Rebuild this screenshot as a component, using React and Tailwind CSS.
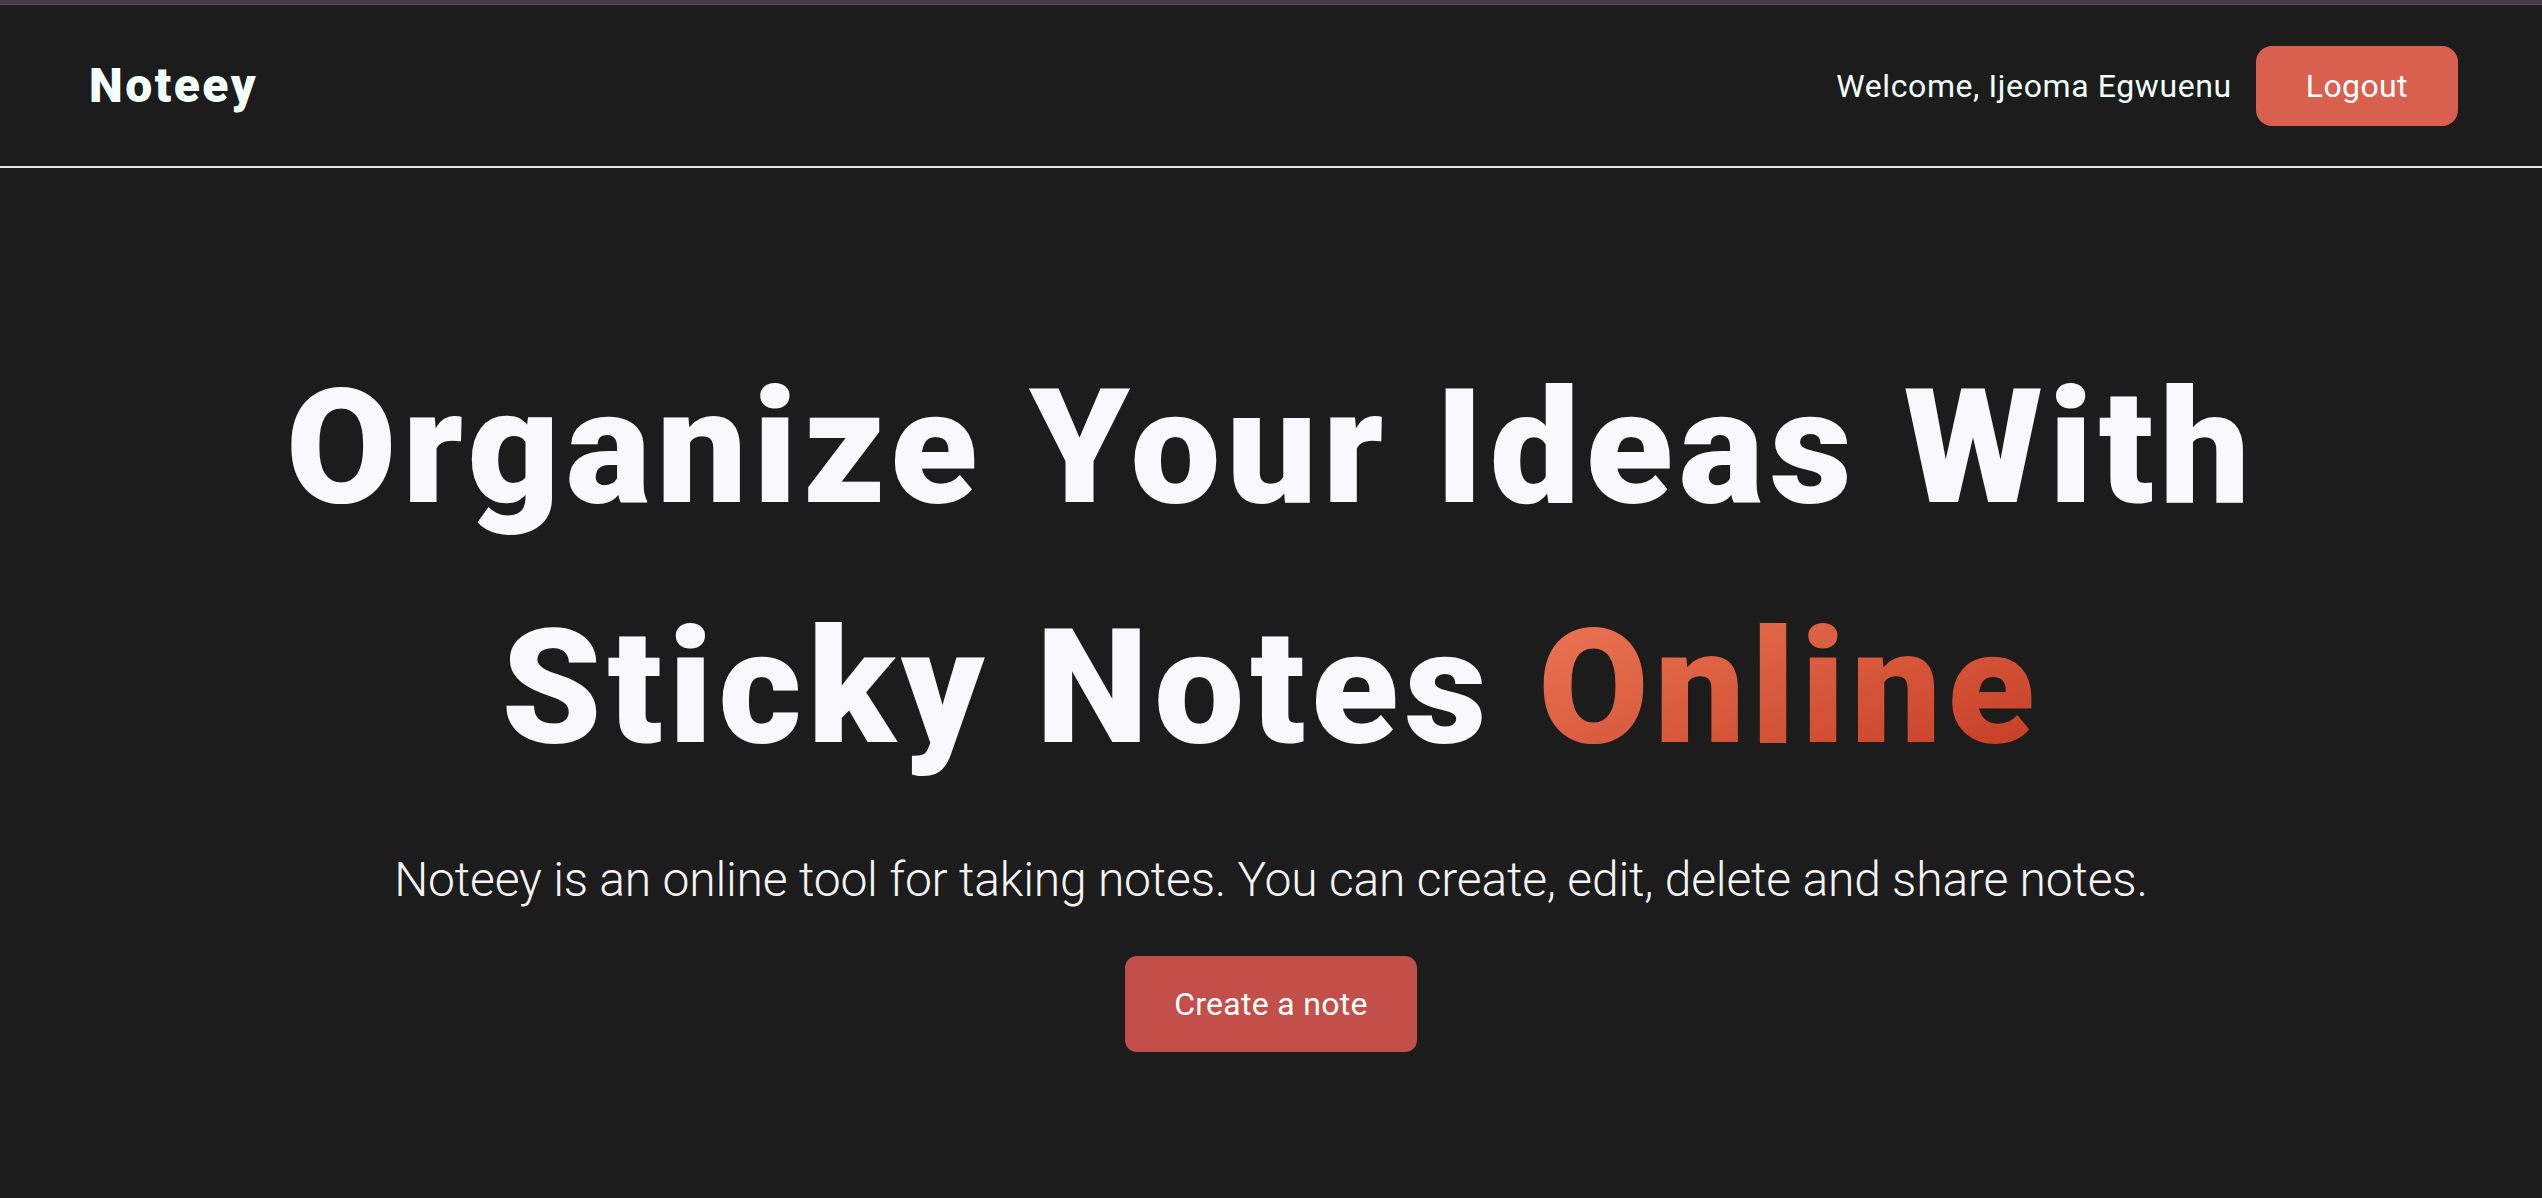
export default function App() {
  return (
    <div className="min-h-screen bg-[#1c1c1c] font-['Roboto',_'Liberation_Sans',_sans-serif]">
      <div className="h-[4px] bg-[#4a3748]" />
      <div className="h-px bg-[#5b4d59]" />

      <header className="flex h-[163px] items-center justify-between border-b-2 border-[#e5e5e5] pl-[89px] pr-[84px]">
        <a href="#" className="text-[48px] font-black leading-none tracking-[2.5px] text-[#f3fffb]">
          Noteey
        </a>
        <div className="flex items-center gap-[24px]">
          <span className="text-[32px] tracking-[0.6px] text-[#f0fffa]">Welcome, Ijeoma Egwuenu</span>
          <button
            type="button"
            className="h-[80px] rounded-[16px] bg-[#d9604f] px-[50px] text-[32px] tracking-[0.4px] text-white"
          >
            Logout
          </button>
        </div>
      </header>

      <main className="flex flex-col items-center pt-[160px] text-center">
        <h1 className="text-[160px] font-black leading-[240px] tracking-[6px] text-[#f9f8fd]">
          Organize Your Ideas With
          <br />
          Sticky Notes{' '}
          <span className="bg-gradient-to-br from-[#ee7858] to-[#c2371f] bg-clip-text text-transparent">
            Online
          </span>
        </h1>

        <p className="mt-[36px] text-[48px] font-light leading-[72px] tracking-[-0.2px] text-[#f4f4f4]">
          Noteey is an online tool for taking notes. You can create, edit, delete and share notes.
        </p>

        <button
          type="button"
          className="mt-[40px] h-[96px] rounded-[12px] bg-[#c24f49] px-[49px] text-[32px] tracking-[0.3px] text-white"
        >
          Create a note
        </button>
      </main>
    </div>
  );
}
